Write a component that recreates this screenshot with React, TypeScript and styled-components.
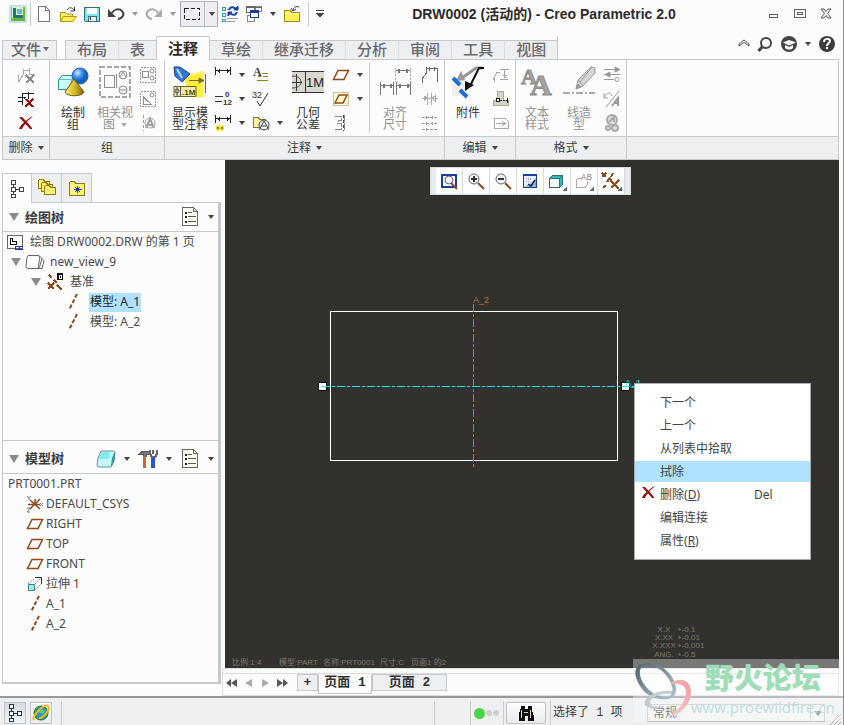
import React, { ReactNode } from "react";
import styled, { createGlobalStyle, css } from "styled-components";

const line = "#c5c8cc";
const strip = "#edeff1";
const paper = "#fcfcfc";
const ink = "#3c3c3c";
const brown = "#8f4a1c";
const uiFont = `"Noto Sans", "Noto Sans CJK SC", sans-serif`;

const GlobalStyle = createGlobalStyle`
  * { box-sizing: border-box; }
  body { margin: 0; background: ${paper}; font-family: ${uiFont}; font-size: 12px; color: ${ink}; }
  button, select { font: inherit; color: inherit; }
  button { background: none; border: 0; padding: 0; margin: 0; }
  ul { list-style: none; margin: 0; padding: 0; }
  h1, h2, p { margin: 0; }
`;

/* ---------- layout ---------- */

const Window = styled.div`
  position: relative;
  display: flex;
  flex-direction: column;
  min-height: 100vh;
  background: ${paper};
  border-right: 1px solid #8e8e8e;
`;

const TitleBar = styled.header`
  display: flex;
  align-items: center;
  height: 28px;
  padding: 0 4px 0 6px;
`;

const Title = styled.h1`
  flex: 1;
  text-align: center;
  font: bold 14px/16px "Liberation Sans", "Noto Sans CJK SC", sans-serif;
  color: #2b2b2b;
  white-space: nowrap;
`;

const ToolButton = styled.button<{ $w?: number }>`
  display: flex;
  flex: none;
  align-items: center;
  justify-content: center;
  width: ${(p) => p.$w ?? 24}px;
  height: 24px;
`;

const SplitBox = styled.div`
  display: flex;
  border: solid #b4b8bc;
  border-width: 1px 0;
  background: #eceef1;
  box-shadow: inset 1px 0 #a5a9ad, inset -1px 0 #a5a9ad;
  & > button + button { border-left: 1px solid #b4b8bc; }
`;

const VRule = styled.span<{ $h?: number; $gap?: number }>`
  flex: none;
  width: 1px;
  height: ${(p) => p.$h ?? 24}px;
  margin: 0 ${(p) => p.$gap ?? 0}px;
  background: #c9ccd0;
`;

const TabRow = styled.nav`
  display: flex;
  align-items: flex-end;
  height: 31px;
  padding: 0 4px 0 2px;
`;

const TabStrip = styled.div`
  display: flex;
  align-items: flex-end;
  margin: 0 auto 0 8px;
  border-right: 1px solid ${line};
`;

const RibbonTab = styled.button<{ $active?: boolean }>`
  position: relative;
  display: flex;
  align-items: center;
  height: ${(p) => (p.$active ? 24 : 19)}px;
  padding: 0 11px 2px;
  border: 1px solid ${line};
  border-width: 1px 0 0 1px;
  background: ${strip};
  color: #6a6a6e;
  font-size: 15px;
  line-height: 16px;
  font-weight: 500;
  white-space: nowrap;
  & + & { border-left-color: #d9dcdf; }
  ${(p) =>
    p.$active &&
    css`
      && { border-color: ${line}; }
      background: ${paper};
      color: #2c2c2c;
      font-weight: 700;
      margin-bottom: -1px;
      border-radius: 2px 2px 0 0;
      box-shadow: 1px 0 ${line};
      z-index: 1;
    `}
`;

const FileTab = styled(RibbonTab)`
  padding: 0 7px 2px 8px;
  gap: 2px;
  border-width: 1px 1px 0 1px;
`;

const TabTools = styled.div`
  display: flex;
  align-self: center;
  align-items: center;
`;

const Ribbon = styled.section`
  display: flex;
  height: 101px;
  margin: 0 4px 0 2px;
  border: 1px solid ${line};
`;

const Group = styled.div<{ $fill?: boolean }>`
  display: flex;
  flex-direction: column;
  flex: ${(p) => (p.$fill ? "1" : "none")};
  border-right: ${(p) => (p.$fill ? 0 : 1)}px solid ${line};
`;

const GroupBody = styled.div<{ $l: number; $r: number }>`
  display: flex;
  flex: 1;
  padding: 3px ${(p) => p.$r}px 0 ${(p) => p.$l}px;
`;

const GroupLabel = styled.div`
  display: flex;
  align-items: center;
  justify-content: center;
  gap: 5px;
  height: 23px;
  border-top: 1px solid ${line};
  background: ${strip};
  line-height: 16px;
`;

const BigButton = styled.button<{ $dim?: boolean; $w?: number }>`
  display: flex;
  flex-direction: column;
  align-items: center;
  justify-content: flex-start;
  gap: 9px;
  width: ${(p) => p.$w ?? 42}px;
  padding-top: 3px;
  line-height: 12px;
  color: ${(p) => (p.$dim ? "#929292" : "#333")};
  white-space: nowrap;
`;

const Column = styled.div`
  display: flex;
  flex-direction: column;
  flex: none;
`;

const Line = styled.div`
  display: flex;
`;

const TextLine = styled.span`
  display: flex;
  align-items: center;
  justify-content: center;
  gap: 6px;
`;

const Main = styled.main`
  display: flex;
  flex: 1;
`;

const Sidebar = styled.aside`
  display: flex;
  flex-direction: column;
  flex: none;
  width: 219px;
  margin: 13px 0 12px 2px;
`;

const SideTabs = styled.div`
  display: flex;
  height: 29px;
`;

const SideTab = styled.button<{ $active?: boolean }>`
  display: flex;
  align-items: center;
  justify-content: center;
  width: 30px;
  border: 1px solid ${line};
  border-width: 1px 1px 0 0;
  background: ${(p) => (p.$active ? paper : strip)};
  &:first-child { border-left-width: 1px; }
  ${(p) => p.$active && css`margin-bottom: -1px; z-index: 1;`}
`;

const Panels = styled.div`
  display: flex;
  flex: 1;
  flex-direction: column;
  border: 1px solid ${line};
  border-width: 1px 3px 2px 1px;
`;

const Panel = styled.section`
  display: flex;
  flex: 1 1 auto;
  flex-direction: column;
  & + & { border-top: 1px solid ${line}; }
`;

const PanelHead = styled.div<{ $h: number }>`
  display: flex;
  align-items: center;
  gap: 6px;
  height: ${(p) => p.$h}px;
  padding: ${(p) => (p.$h > 30 ? 3 : 0)}px 0 0 6px;
  border-bottom: 1px solid ${line};
`;

const PanelTitle = styled.h2`
  flex: 1;
  padding-bottom: 1px;
  font-size: 13px;
  line-height: 18px;
  font-weight: 700;
`;

const PanelTools = styled.div`
  display: flex;
  align-items: center;
`;

const Tree = styled.ul`
  flex: 1 0 208px;
`;

const TreeRow = styled.li<{ $indent: number; $gap?: number }>`
  display: flex;
  align-items: center;
  gap: ${(p) => p.$gap ?? 4}px;
  height: 20px;
  padding-left: ${(p) => p.$indent}px;
  color: #4a4a4a;
  white-space: nowrap;
`;

const TreeLabel = styled.span<{ $selected?: boolean }>`
  padding: 0 1px 1px;
  line-height: 18px;
  background: ${(p) => (p.$selected ? "#aee2ff" : "none")};
  color: ${(p) => (p.$selected ? "#222" : "inherit")};
`;

const Work = styled.div`
  display: flex;
  flex: 1;
  flex-direction: column;
  min-width: 0;
  padding: 0 4px 0 1px;
`;

const Canvas = styled.div`
  position: relative;
  display: flex;
  flex: 1;
  align-items: flex-start;
  justify-content: center;
  margin-left: 3px;
  padding: 7px 4px 0 0;
  background: #33312d;
`;

const Sheet = styled.svg`
  position: absolute;
  inset: 0;
  width: 100%;
  height: 100%;
  font-family: "Liberation Sans", "Noto Sans CJK SC", sans-serif;
`;

const ViewBar = styled.div`
  position: relative;
  display: flex;
  height: 28px;
  padding: 0 5px;
  border: 1px solid #d5d9dd;
  background: #e9ecef;
`;

const ViewButton = styled.button`
  display: flex;
  align-items: center;
  justify-content: center;
  width: 27px;
  border-right: 1px solid #d9dcdf;
  background: #fff;
`;

const Menu = styled.ul`
  position: absolute;
  left: 409px;
  top: 223px;
  width: 177px;
  border: 1px solid #a9abae;
  background: #fff;
  && { padding: 7px 0; }
`;

const MenuItem = styled.button<{ $hot?: boolean }>`
  display: grid;
  grid-template-columns: 18px 94px 1fr;
  align-items: center;
  width: 100%;
  height: 23px;
  padding-left: 7px;
  text-align: left;
  line-height: 18px;
  color: #444;
  background: ${(p) => (p.$hot ? "linear-gradient(#aee2ff, #aee2ff) 0 1px / 100% 21px no-repeat" : "none")};
`;

const SheetBar = styled.div`
  height: 28px;
  padding-top: 4px;
  border: 1px solid #dcdfe2;
`;

const SheetTabs = styled.div`
  display: flex;
  align-items: flex-start;
  height: 22px;
  border-top: 1px solid #d9dcdf;
`;

const SheetNav = styled.div`
  display: flex;
  align-items: center;
  width: 74px;
  height: 18px;
`;

const SheetTab = styled.button<{ $active?: boolean; $w: number }>`
  width: ${(p) => p.$w}px;
  height: ${(p) => (p.$active ? 20 : 17)}px;
  padding-bottom: ${(p) => (p.$active ? 3 : 0)}px;
  border: 1px solid ${line};
  border-top-color: ${(p) => (p.$active ? paper : line)};
  background: ${(p) => (p.$active ? paper : strip)};
  font: bold 13px/15px "Liberation Mono", "Noto Sans CJK SC", monospace;
  color: #333;
  white-space: nowrap;
`;

const StatusBar = styled.footer`
  display: flex;
  align-items: center;
  height: 30px;
  padding: 2px 18px 0 4px;
  border-top: 2px solid #999;
  background: ${strip};
`;

const StatusButton = styled.button<{ $pressed?: boolean; $w: number }>`
  display: flex;
  flex: none;
  align-items: center;
  justify-content: center;
  width: ${(p) => p.$w}px;
  height: 22px;
  margin-right: 4px;
  border: 1px solid #bfc3c7;
  border-radius: ${(p) => (p.$w > 30 ? 2 : 0)}px;
  background: ${(p) => (p.$pressed ? "linear-gradient(#d8dbde, #f2f4f5)" : "linear-gradient(#fdfdfd, #e9ebed)")};
`;

const StatusSpace = styled.span`
  flex: 1;
`;

const Progress = styled.span`
  flex: none;
  width: 35px;
`;

const Lights = styled.div`
  display: flex;
  flex: none;
  align-items: center;
  justify-content: center;
  gap: 1px;
  width: 30px;
`;

const Light = styled.span<{ $on?: boolean }>`
  width: ${(p) => (p.$on ? 11 : 6)}px;
  height: ${(p) => (p.$on ? 11 : 6)}px;
  border-radius: 50%;
  background: ${(p) => (p.$on ? "#4bd24b" : "#cdcfcd")};
`;

const Selected = styled.output`
  flex: none;
  width: 96px;
  padding-left: 2px;
  font: 12px/16px "Liberation Mono", "Noto Sans CJK SC", monospace;
  white-space: nowrap;
`;

const FilterBox = styled.div`
  position: relative;
  display: flex;
  flex: none;
  width: 178px;
`;

const Filter = styled.select`
  appearance: none;
  width: 100%;
  height: 18px;
  padding: 0 5px;
  border: 1px solid #c0c3c6;
  background: #f1f2f3;
  line-height: 16px;
`;

const FilterArrow = styled.span`
  position: absolute;
  right: 1px;
  top: 1px;
  display: flex;
  align-items: center;
  justify-content: center;
  width: 14px;
  height: 16px;
  border-left: 1px solid ${line};
  pointer-events: none;
`;

const Grip = styled.svg`
  position: absolute;
  right: 2px;
  bottom: 0;
`;

const Watermark = styled.div`
  position: absolute;
  right: 0;
  bottom: 5px;
  display: flex;
  width: 210px;
  height: 62px;
  background: rgba(255, 255, 255, 0.35);
  pointer-events: none;
`;

const WatermarkText = styled.div`
  display: flex;
  flex-direction: column;
  align-items: center;
  margin-left: -14px;
  font-weight: 900;
  font-size: 29px;
  line-height: 38px;
  color: #9fdcb8;
  white-space: nowrap;
`;

const WatermarkUrl = styled.span`
  font: 15px/20px "Open Sans", sans-serif;
  color: #b9dfdf;
`;

/* ---------- icons ---------- */

type IconProps = { s?: number; w?: number; vb?: string; soft?: boolean; children?: ReactNode };

const Icon = ({ s = 18, w, vb, soft, children }: IconProps) => (
  <svg
    width={w ?? s}
    height={s}
    viewBox={vb ?? `0 0 ${w ?? s} ${s}`}
    fill="none"
    stroke="#444"
    overflow="visible"
    shapeRendering={soft ? "auto" : "crispEdges"}
    aria-hidden="true"
  >
    {children}
  </svg>
);

const Caret = ({ c = "#444", s = 6 }: { c?: string; s?: number }) => (
  <svg width={s} height={s / 2 + 1} viewBox="0 0 6 4" preserveAspectRatio="none" fill={c} aria-hidden="true">
    <path d="M0 0h6L3 4z" />
  </svg>
);

const CaretButton = ({ c, label }: { c?: string; label: string }) => (
  <ToolButton $w={14} aria-label={label}><Caret c={c} /></ToolButton>
);

const RedX = ({ s = 14 }: { s?: number }) => (
  <Icon s={s} vb="0 0 14 14" soft>
    <path d="M0 1h3l4 4c2-2 4-4 7-5-3 3-5 4-6 6l5 6v1h-2L6.500 8C5 9 4 11 3 13H0c1-3 3-5 5-6.500z" fill="#960d0d" stroke="none" />
  </Icon>
);

const AppIcon = () => (
  <Icon>
    <rect x="0" y="0" width="18" height="18" fill="#c3e2f2" stroke="none" />
    <rect x="2" y="2" width="14" height="14" fill="#8cc63f" stroke="none" />
    <path d="M16 2v14H2z" fill="#6db33a" stroke="none" />
    <rect x="3" y="2" width="11" height="11" fill="#e3f2b4" stroke="none" />
    <path d="M4 3h3v7h7v3H4z" fill="#1d7386" stroke="none" />
    <rect x="8" y="4" width="5" height="5" fill="#4fbfe4" stroke="none" />
  </Icon>
);

const NewIcon = () => (
  <Icon><path d="M3.500 1.500h7l4 4v11h-11zM10.500 1.500v4h4" fill="#fff" stroke="#777" /></Icon>
);

const OpenIcon = () => (
  <Icon soft>
    <path d="M1.500 16V7.500h5l1 1.500h6v3" fill="#ffe97a" stroke="#b8960a" />
    <path d="M1.500 16.500l3-5h13l-4 5z" fill="#ffee58" stroke="#b8960a" />
    <path d="M8 5c2-3 5-3 7 0M15.500 2v4h-4" stroke="#333" />
  </Icon>
);

const SaveIcon = () => (
  <Icon>
    <path d="M1.500 2.500h15v14h-14l-1-1z" fill="#7fe3ea" stroke="#3c6c74" />
    <rect x="4" y="3" width="10" height="6" fill="#fff" stroke="#9ab" strokeWidth="0" />
    <rect x="5.500" y="11.500" width="8" height="5" fill="#e6f6f8" stroke="#3c6c74" />
    <path d="M7.500 12v3" />
  </Icon>
);

const Undo = ({ c, flip }: { c: string; flip?: boolean }) => (
  <Icon soft>
    <g transform={flip ? "matrix(-1 0 0 1 18 0)" : undefined}>
      <path d="M5 8c2-4 7-5 10-2s1 7-4 8" stroke={c} strokeWidth="2" />
      <path d="M1 4v8h8z" fill={c} stroke="none" />
    </g>
  </Icon>
);

const SelectIcon = () => (
  <Icon><rect x="1.500" y="3.500" width="15" height="11" stroke="#222" strokeDasharray="4 2" /></Icon>
);

const RegenIcon = () => (
  <Icon>
    <path d="M1.500 2.500h3v3h-3zM1.500 8.500h3v3h-3zM1.500 14.500h3v2h-3z" stroke="#2aa4b4" />
    <path d="M6 4.500h2M6 10.500h2M6 13.500h11M6 16.500h8" stroke="#999" />
    <g shapeRendering="auto" stroke="#1745a0" strokeWidth="2"><path d="M8 5c1-3 4-4 7-1M16 7c-1 3-4 4-7 1" /><path d="M17 1v4h-4zM7 11V7h4z" fill="#1745a0" strokeWidth="1" /></g>
  </Icon>
);

const WindowsIcon = () => (
  <Icon>
    <rect x="1.500" y="1.500" width="8" height="6" fill="#fff" stroke="#666" />
    <rect x="10.500" y="1.500" width="6" height="5" fill="#fff" stroke="#888" />
    <rect x="2.500" y="10.500" width="7" height="6" fill="#fff" stroke="#888" />
    <path d="M1 2.500h9M10 2.500h7" stroke="#666" />
    <rect x="5.500" y="5.500" width="8" height="7" fill="#fff" stroke="#123f91" />
    <path d="M5 6.500h9" stroke="#123f91" strokeWidth="2" />
  </Icon>
);

const FolderCloseIcon = () => (
  <Icon>
    <path d="M1.500 5.500h6l1 2h8v9h-15z" fill="#ffee55" stroke="#a88b0c" />
    <path d="M2 8.500h14" stroke="#fffbd0" />
    <path d="M16 2c-3-1-5 0-6 3M8 3l2 3 3-2" stroke="#333" shapeRendering="auto" />
  </Icon>
);

const CutSketchIcon = () => (
  <Icon>
    <path d="M2 16l5-9M6.500 3v4M12.500 2v7M7 4.500h5M12 8.500h5M1 9v7M8 10h4" stroke="#a9a9a9" />
    <path d="M9 9l8 8M17 9l-8 8" stroke="#8d8d8d" strokeWidth="2" />
  </Icon>
);

const CutLineIcon = () => (
  <Icon>
    <path d="M1 7.500h8M5.500 3v12M5 3.500h12M11.500 2v7M1 11.500h5M6 7l4 4" stroke="#222" />
    <path d="M9 9l7 8M16 9l-8 8" stroke="#960d0d" strokeWidth="2" />
  </Icon>
);

const DraftGroupIcon = () => (
  <Icon s={32} soft>
    <defs>
      <radialGradient id="ball" cx=".35" cy=".3"><stop offset="0" stopColor="#d8efff" /><stop offset=".5" stopColor="#4b9cf0" /><stop offset="1" stopColor="#155ec0" /></radialGradient>
      <linearGradient id="cone"><stop offset="0" stopColor="#fff07a" /><stop offset=".5" stopColor="#d9b92c" /><stop offset="1" stopColor="#7c6410" /></linearGradient>
    </defs>
    <path d="M1.500 13.500l4-4h13v10l-4 4h-13z" fill="#cbfafa" stroke="#2a9494" />
    <path d="M1.500 13.500h13l4-4M14.500 13.500v10" stroke="#62bcbc" />
    <circle cx="23" cy="10" r="8" fill="url(#ball)" stroke="#2566bf" />
    <path d="M17 13L8 26c2 5 17 5 19 0z" fill="url(#cone)" stroke="#6d5810" />
  </Icon>
);

const RelatedViewIcon = () => (
  <Icon s={32}>
    <rect x="1" y="1" width="30" height="30" stroke="#a6a6a6" strokeWidth="2" strokeDasharray="5 2" />
    <path d="M5.500 9.500h10v12h-10zM17.500 8v14" stroke="#8e8e8e" />
    <g stroke="#8e8e8e" shapeRendering="auto"><circle cx="24" cy="9" r="4" /><path d="M21 11l3-5 3 5" /><circle cx="24" cy="24" r="4" /><path d="M21 24h6" /></g>
  </Icon>
);

const SmallView = ({ kind }: { kind: number }) => (
  <Icon>
    {kind < 2 && <rect x="1.500" y="1.500" width="15" height="15" stroke="#999" strokeDasharray="2 1" />}
    {kind === 0 && <g stroke="#8e8e8e"><path d="M3.500 5.500h6v6h-6z" /><circle cx="13" cy="5" r="2" shapeRendering="auto" /><circle cx="13" cy="12" r="2" shapeRendering="auto" /></g>}
    {kind === 1 && <g stroke="#8e8e8e"><path d="M4.500 7v7H12zM4 7l8 7" /><circle cx="13" cy="5" r="2" shapeRendering="auto" /></g>}
    {kind === 2 && <g stroke="#a0a0a0"><path d="M4.500 1v16" strokeDasharray="3 2" /><g shapeRendering="auto"><circle cx="11" cy="9" r="5" /><path d="M7 14l4-9 4 9M8 11h6" strokeWidth="2" /></g></g>}
  </Icon>
);

const ShowAnnotationsIcon = () => (
  <Icon s={32} w={34} vb="0 0 34 32" soft>
    <path d="M11 11l20-6v26H16z" fill="#ffec3d" stroke="none" />
    <path d="M12 10l18-4v24" stroke="#fff47f" strokeWidth="3" strokeDasharray="2 2" />
    <path d="M1 1h6l10 7-8 8-7-6z" fill="#3478d8" stroke="#174488" />
    <path d="M4 3l5 9" stroke="#bddcff" strokeWidth="2" />
    <path d="M16 14.500h15M26 12v5l5-2.500zM32.500 8v19" stroke="#75701a" fill="#75701a" />
    <path d="M1 20.500h22v10H1z" fill="#ede9a8" stroke="#6b6420" />
    <path d="M7.500 20v11M4 21v9" stroke="#555" />
    <circle cx="4" cy="25" r="2" stroke="#555" />
    <text x="9" y="29" fontSize="8" fontWeight="700" fontFamily="Liberation Sans" fill="#55500f" stroke="none">.1M</text>
  </Icon>
);

const DimIcon = ({ tag }: { tag?: boolean }) => (
  <Icon>
    <path d="M1.500 1v8M16.500 1v8M2 4.500h15M5 2.500v4M4 3.500v2M13 2.500v4M14 3.500v2" stroke="#222" />
    {tag && <g shapeRendering="auto"><rect x="2" y="11" width="8" height="6" fill="#ffee55" stroke="none" /><circle cx="4" cy="14" r="1" stroke="#776d10" /><circle cx="8" cy="14" r="1" stroke="#776d10" /></g>}
  </Icon>
);

const OrdinateIcon = () => (
  <Icon><path d="M1 6.500h8M1 11.500h7" stroke="#333" /><g fontSize="8" fontWeight="700" fill="#333" stroke="none" fontFamily="Liberation Sans"><text x="11" y="7">0</text><text x="9" y="15">12</text></g></Icon>
);

const NoteIcon = () => (
  <Icon><text x="1" y="10" fontSize="12" fontWeight="700" fontFamily="Liberation Serif" fill="#444" stroke="none">A</text><path d="M10 7.500h6M6 10.500h3M11 10.500h5M5 14.500h11" stroke="#8a8420" /></Icon>
);

const FinishIcon = () => (
  <Icon soft><text x="0" y="8" fontSize="9" fontFamily="Liberation Sans" fill="#333" stroke="none">32</text><path d="M5 11l3 5 8-13" stroke="#333" /></Icon>
);

const SymbolIcon = () => (
  <Icon>
    <path d="M1.500 3.500h5l1 2h6v8h-12z" fill="#fff3a0" stroke="#8a7a20" />
    <g shapeRendering="auto"><circle cx="12" cy="11" r="5" fill="#eee" stroke="#444" /><path d="M7 16l5-9 5 9M10 12h4" /></g>
  </Icon>
);

const GtolIcon = () => (
  <Icon s={32}>
    <rect x="0" y="5" width="32" height="22" fill="#d9d7cf" stroke="none" />
    <path d="M0 5.500h32M0 26.500h32M13.500 5v22M0 16.500h10M4.500 8v17" stroke="#333" />
    <path d="M0 10c5 0 9 2 9 6s-4 6-9 6" shapeRendering="auto" />
    <text x="14" y="21" fontSize="13" fontFamily="Liberation Sans" fill="#222" stroke="none">1M</text>
  </Icon>
);

const PlaneIcon = ({ framed }: { framed?: boolean }) => (
  <Icon soft>
    {framed && <rect x="1.500" y="2.500" width="15" height="13" fill="#fffbd8" stroke="#c9c39a" />}
    <path d={framed ? "M7 5h8l-4 8H3z" : "M6 4.500h10.500L12 13.500H1.500z"} stroke={brown} strokeWidth="1.500" />
  </Icon>
);

const TargetIcon = () => (
  <Icon><path d="M3 2h6v4H6v3h3v6H3M12.500 1v16M5 9h4" stroke="#888" strokeDasharray="7 1" /><path d="M11.500 1v16" stroke="#444" strokeDasharray="3 2" /></Icon>
);

const AlignDimIcon = () => (
  <Icon s={32}>
    <path d="M16.500 2v9M31.500 2v9M16.500 12v4M31.500 12v4" stroke="#aaa" strokeDasharray="2 1" />
    <path d="M17 4.500h14M1.500 16v13M14.500 16v13M17.500 16v13M31.500 16v13M2 19.500h12M18 19.500h13" stroke="#777" />
    <path d="M20 2.500v4M28 2.500v4M4.500 17.500v4M11.500 17.500v4M20.500 17.500v4M28.500 17.500v4" stroke="#777" strokeWidth="2" />
  </Icon>
);

const DimEditIcon = ({ kind }: { kind: number }) => (
  <Icon>
    {kind === 0 && <path d="M1.500 17v-5l4-5V1M5 2.500h11M16.500 2v14M8 1v4M13 1v4" stroke="#666" />}
    {kind === 1 && <path d="M1 8.500h16M6.500 3v12M10.500 3v12M6 8l-3-2v5zM11 8l3-2v5z" stroke="#aaa" />}
    {kind === 2 && <path d="M1 3.500h16M1 9.500h16M1 15.500h16M5 1.500v4M11 1.500v4M5 7.500v4M11 7.500v4M5 13.500v4" stroke="#999" strokeDasharray="3 1" />}
  </Icon>
);

const AttachIcon = () => (
  <Icon s={32} soft>
    <path d="M0 12h14v18H0z" fill="#f1f0ea" stroke="none" />
    <path d="M31 2H24L10 12" stroke="#999" strokeWidth="3" /><path d="M9 5l4 9-9 1z" fill="#999" stroke="none" />
    <path d="M32 2h-5l-9 18" stroke="#111" strokeWidth="2" /><path d="M13 15l9 4-9 6z" fill="#111" stroke="none" />
    <path d="M1 12l7 7M8 24l7 7" stroke="#1d6fd8" strokeWidth="4" />
  </Icon>
);

const EditIcon = ({ kind }: { kind: number }) => (
  <Icon>
    {kind === 0 && <path d="M1 14l4-8h3M2.500 16v-5M8 3.500h9M12.500 4v8M10.500 9.500h4M8 13.500h8M11.500 11.500h2" stroke="#a5a5a5" />}
    {kind === 1 && <g><path d="M5.500 1.500h6v9h5v5h-15v-5h4z" fill="#d4d3c4" stroke="#aaa99a" /><rect x="4.500" y="8.500" width="3" height="3" fill="#fff" stroke="#222" /><path d="M8 10.500h9M15.500 8v5" stroke="#222" strokeDasharray="2 1" /></g>}
    {kind === 2 && <path d="M2.500 4.500h11l3 3v7h-14zM4 9.500h8M10 7l3 2.500L10 12" stroke="#aaa" />}
  </Icon>
);

const TextStyleIcon = () => (
  <Icon s={32} soft><g fontFamily="Liberation Serif" fontWeight="700" fill="#a4a4a4" stroke="#8d8d8d"><text x="0" y="18" fontSize="22">A</text><text x="9" y="29" fontSize="30">A</text></g></Icon>
);

const LineStyleIcon = () => (
  <Icon s={32} soft>
    <path d="M13 23l2-9L28 1l4 1v5L20 20z" fill="#d6d6d6" stroke="#999" /><path d="M13 23l2-5 3 3zM15 14l5 6M29 1L17 16" fill="#999" stroke="#999" />
    <path d="M0 27h32" stroke="#aaa" strokeWidth="2" strokeDasharray="7 2 2 2" />
  </Icon>
);

const FormatIcon = ({ kind }: { kind: number }) => (
  <Icon soft>
    {kind === 0 && <g stroke="#999"><path d="M1 3.500h14M1 8.500h16M1 13.500h10" /><path d="M12 1l5 2.500L12 6zM7 6l-5 2.500L7 11z" fill="#999" /><circle cx="14" cy="13.500" r="2" /></g>}
    {kind === 1 && <g stroke="#999"><path d="M2 7c1-5 6-5 7-1M1 3v5h4M3 17L16 1" /><path d="M9 16l6-8v8M11 13h4" strokeWidth="2" /></g>}
    {kind === 2 && <g stroke="#aaa" strokeWidth="2" fill="#ddd"><circle cx="9" cy="6" r="5" /><path d="M6 8l5-5v5" /><circle cx="5" cy="14" r="2" /><circle cx="12" cy="14" r="3" /></g>}
  </Icon>
);

const TreeIcon = ({ c = "#444" }: { c?: string }) => (
  <Icon><path d="M3.500 0.500h4v4h-4zM3.500 7.500h4v4h-4zM3.500 14.500h4v3h-4zM11.500 7.500h4v4h-4zM5.500 5v2M5.500 12v2M8 9.500h3" stroke={c} fill="#fff" /></Icon>
);

const FoldersIcon = () => (
  <Icon s={20}>
    {[0, 3, 6].map((d) => (
      <path key={d} d={`M${1.5 + d} ${10.5 + d}v-8l1-1h4l1 2h5v7z`} fill="#fff176" stroke="#8f7a10" />
    ))}
  </Icon>
);

const StarFolderIcon = () => (
  <Icon s={18}>
    <path d="M1.500 16.500v-13l1-1h4l1 2h9v12z" fill="#fff37a" stroke="#8f7a10" />
    <path d="M9.500 7v7M6 10.500h8M7 8l5 5M12 8l-5 5" stroke="#1f2fb0" />
  </Icon>
);

const ListIcon = () => (
  <Icon s={20}>
    <path d="M2.500 0.500h11l4 4v14h-15zM13.500 0.500v4h4" fill="#fffef2" stroke="#666" />
    <path d="M5 5.500h2M5 9.500h2M5 14.500h2" stroke="#222" strokeWidth="2" /><path d="M8 5.500h4M8 9.500h8M8 14.500h8" stroke="#555" />
  </Icon>
);

const SolidIcon = () => (
  <Icon s={20} soft>
    <path d="M5 2h12q2 0 2 2l-1 8-3 6H3q-2 0-2-2l1-7z" fill="#c4f8fa" stroke="#6d8f90" /><path d="M5 3h9l-1 7H3z" fill="#7eebef" stroke="none" /><path d="M15 17l1-8 2-5h1v6l-3 7z" fill="#3b98a6" stroke="none" />
  </Icon>
);

const ToolsIcon = () => (
  <Icon s={20}>
    <path d="M1 5l4-3h6v3H8v2H5V5z" fill="#777" stroke="#555" /><path d="M6.500 7v12" stroke="#c0702a" strokeWidth="3" />
    <path d="M15 9v10" stroke="#1c5cc4" strokeWidth="4" /><path d="M12 1v4l2 3h3l2-3V1M15 1v4" stroke="#666" strokeWidth="2" />
  </Icon>
);

const DrawingIcon = () => (
  <Icon s={16}><path d="M.5 1.500h15v13H.5z" fill="#fff" stroke="#666" /><path d="M3.500 4v6h6V7.500h-4V4z" fill="#fff" stroke="#111" /><path d="M8 12.500h8M8 15h8M8.500 12v4M12 12v4" stroke="#1734b8" /></Icon>
);

const ViewIcon = () => (
  <Icon s={18} w={20} soft><path d="M3 2.500h11l5 5-2 8H3q-2 0-2-2l1-9z" fill="#fff" stroke="#666" /><path d="M11.500 15.500q2 0 2-2l1-8q0-2-1-3M13 15.500q2-1 2-3l2-7" stroke="#666" /></Icon>
);

const DatumIcon = () => (
  <Icon s={18}><path d="M3 2l3 3M8 7l3 3M2 10l6 6M8 10l-6 6M11 12l5 5" stroke={brown} strokeWidth="2" /><rect x="11" y="0" width="6" height="7" fill="#111" stroke="none" /><path d="M13 2.500h2v3h-2z" stroke="#fff" /></Icon>
);

const AxisIcon = () => (
  <Icon s={18} w={16} soft><path d="M12 1L4 17" stroke={brown} strokeWidth="2" strokeDasharray="4 2" /></Icon>
);

const CsysIcon = () => (
  <Icon s={18} soft><path d="M4 5l10 9M14 4L4 14M2 9.500h12M9 4v6" stroke={brown} strokeWidth="1.500" /><path d="M1 1l2 2 2-2M3 3v2M14 8l3 3M17 8l-3 3M1 13h3l-3 4h3" stroke="#777" /></Icon>
);

const ExtrudeIcon = () => (
  <Icon s={18} soft><path d="M2.500 9.500h6v6h-6z" fill="#9af4f6" stroke="#357f8a" /><path d="M2 9l7-6M9 9l6-6M9 15l6-6" stroke="#888" strokeDasharray="2 1" /><path d="M9 2.500h6.500V9" stroke="#333" /></Icon>
);

const Expander = () => (
  <svg width="10" height="8" viewBox="0 0 10 8" fill="#8b8b8b" aria-hidden="true"><path d="M0 0h10L5 8z" /></svg>
);

const Lens = ({ sign, framed }: { sign?: string; framed?: boolean }) => (
  <Icon s={18} soft>
    {framed && <path d="M1.500 2.500h14v12h-14z" fill="#fff" stroke="#173f9b" strokeWidth="2" shapeRendering="crispEdges" />}
    <circle cx={framed ? 9 : 7} cy={framed ? 8 : 7} r={framed ? 4 : 5} fill="#f4f8fb" stroke="#666" />
    <path d="M11 11l6 6" stroke="#8c4a1d" strokeWidth="2" />
    {sign && <path d={sign} stroke="#333" strokeWidth="2" shapeRendering="crispEdges" />}
  </Icon>
);

const ViewIcons = [
  <Lens framed />,
  <Lens sign="M4 7h6M7 4v6" />,
  <Lens sign="M4 7h6" />,
  <Icon><rect x="2.500" y="2.500" width="13" height="13" fill="#e6f0f8" stroke="#173f9b" /><path d="M2 3h14" stroke="#173f9b" strokeWidth="2" /><path d="M5 6h5M5 9h4M7 7.500h4" stroke="#8ab5e0" strokeDasharray="1 1" /><path d="M3 15l6-3 6-6v9z" fill="#8fb4dc" stroke="none" shapeRendering="auto" /><path d="M7 12l3 2 4-6" stroke="#123" strokeWidth="1.500" shapeRendering="auto" /></Icon>,
  <Icon><path d="M1.500 6.500h10v9h-10z" fill="#f4ffff" stroke="#555" /><path d="M1.500 6.500l3-3h10l-3 3zM11.500 6.500l3-3v9l-3 3z" fill="#2fb7bf" stroke="#277" /><path d="M19 14v5h-4z" fill="#666" stroke="none" /></Icon>,
  <Icon><path d="M1.500 6.500h5M1.500 7v8h9l2-3V9" stroke="#aaa" /><text x="6" y="8" fontSize="9" fontFamily="Liberation Mono" fill="#888" stroke="none">AB</text><path d="M19 14v5h-4z" fill="#666" stroke="none" /></Icon>,
  <Icon s={20}><path d="M1 2l4 4M5 2L1 6M12 2l-2 4M8 8l-2 3M4 14l-1 3M8 7l3 3M10 10l8 8M18 9l-8 8" stroke={brown} strokeWidth="2" /><path d="M21 15v5h-4z" fill="#666" stroke="none" /></Icon>,
];
const viewNames = ["重新调整", "放大", "缩小", "重画", "显示样式", "注释显示", "基准显示"];

const GlobeIcon = () => (
  <Icon soft><circle cx="9" cy="9" r="7" fill="#33a853" stroke="#156e2c" /><path d="M5 4l6-1 4 5-3 7-5-1-3-5z" fill="#2d8fe0" stroke="none" /><path d="M6 8l3-3 4 2-2 3z" fill="#58d06b" stroke="none" /><path d="M2 16C-1 13 12-1 16 2s-6 13-9 12" stroke="#f2b51d" strokeWidth="2" /></Icon>
);

const BinocularsIcon = () => (
  <Icon s={18}><path d="M4 2h3v3h4V2h3v3l2 6v5h-5v-5H7v5H2v-5l2-6z" fill="#111" stroke="#111" /><path d="M4.500 6v8M13.500 6v8M7 8h4" stroke="#d8d8a8" /></Icon>
);

/* ---------- data ---------- */

const tabs = ["布局", "表", "注释", "草绘", "继承迁移", "分析", "审阅", "工具", "视图"];

type MenuRow = { text: string; key?: string; shortcut?: string; icon?: boolean; hot?: boolean };
const menu: MenuRow[] = [
  { text: "下一个" },
  { text: "上一个" },
  { text: "从列表中拾取" },
  { text: "拭除", hot: true },
  { text: "删除", key: "D", shortcut: "Del", icon: true },
  { text: "编辑连接" },
  { text: "属性", key: "R" },
];

const modelRows: [ReactNode, string][] = [
  [<CsysIcon />, "DEFAULT_CSYS"],
  [<PlaneIcon />, "RIGHT"],
  [<PlaneIcon />, "TOP"],
  [<PlaneIcon />, "FRONT"],
  [<ExtrudeIcon />, "拉伸 1"],
  [<AxisIcon />, "A_1"],
  [<AxisIcon />, "A_2"],
];

const sheetNotes: [number, string][] = [[7, "比例:1:4"], [54, "模型:PART"], [98, "名称:PRT0001"], [155, "尺寸:C"], [186, "页面1 的2"]];
const tolerances: [number, string, string][] = [[472, "X.X", "+-0.1"], [480, "X.XX", "+-0.01"], [488, "X.XXX", "+-0.001"], [497, "ANG.", "+-0.5"]];

/* ---------- parts ---------- */

const CaretSpace = styled.span`
  width: 14px;
`;

const Big = ({ icon, lines, dim, caret, w }: { icon: ReactNode; lines: string[]; dim?: boolean; caret?: boolean; w?: number }) => (
  <BigButton $dim={dim} $w={w}>
    {icon}
    <span>
      {lines.map((t, i) => (
        <TextLine key={t}>{t}{caret && i === lines.length - 1 && <Caret c="#aaa" />}</TextLine>
      ))}
    </span>
  </BigButton>
);

const Small = ({ name, icons, carets }: { name: string; icons: ReactNode[]; carets?: boolean[] }) => (
  <Column>
    {icons.map((icon, i) => (
      <Line key={i}>
        <ToolButton aria-label={`${name} ${i + 1}`}>{icon}</ToolButton>
        {carets && (carets[i] ? <CaretButton label={`${name} ${i + 1} 选项`} /> : <CaretSpace />)}
      </Line>
    ))}
  </Column>
);

const RibbonGroup = ({ label, l, r, caret = true, children }: { label: string; l: number; r: number; caret?: boolean; children: ReactNode }) => (
  <Group>
    <GroupBody $l={l} $r={r}>{children}</GroupBody>
    <GroupLabel>{label}{caret && <Caret />}</GroupLabel>
  </Group>
);

const Drawing = () => (
  <Sheet shapeRendering="crispEdges" fill="none">
    <rect x="105.500" y="151.500" width="287" height="149" stroke="#fff" />
    <path d="M248.500 144v164" stroke="#b07a35" strokeDasharray="8 2 3 2" />
    <g fill="#fff" stroke="#000"><rect x="93.500" y="222.500" width="8" height="8" /><rect x="396.500" y="222.500" width="8" height="8" /></g>
    <path d="M97 226.500h315" stroke="#00f5f5" strokeDasharray="8 2 3 2" />
    <text x="248" y="143" fontSize="9" fill="#b07a35">A_2</text>
    <text x="400" y="226" fontSize="9" fill="#00f5f5">A_1</text>
    <g fontSize="8" fill="#7b7972">
      {sheetNotes.map(([x, t]) => <text key={t} x={x} y="505">{t}</text>)}
      {tolerances.map(([y, a, b]) => (
        <g key={a}><text x="439" y={y} textAnchor="middle">{a}</text><text x="452" y={y}>{b}</text></g>
      ))}
    </g>
  </Sheet>
);

export default function App() {
  return (
    <Window>
      <GlobalStyle />
      <TitleBar>
        <ToolButton aria-label="Creo"><AppIcon /></ToolButton>
        <VRule />
        <VRule $h={0} />
        <ToolButton aria-label="新建"><NewIcon /></ToolButton>
        <ToolButton aria-label="打开"><OpenIcon /></ToolButton>
        <ToolButton aria-label="保存"><SaveIcon /></ToolButton>
        <ToolButton aria-label="撤消"><Undo c="#444" /></ToolButton>
        <CaretButton c="#999" label="撤消列表" />
        <ToolButton aria-label="重做"><Undo c="#aaa" flip /></ToolButton>
        <CaretButton c="#999" label="重做列表" />
        <SplitBox>
          <ToolButton aria-label="选择"><SelectIcon /></ToolButton>
          <CaretButton label="选择选项" />
        </SplitBox>
        <ToolButton aria-label="重新生成"><RegenIcon /></ToolButton>
        <ToolButton aria-label="窗口"><WindowsIcon /></ToolButton>
        <CaretButton label="窗口列表" />
        <ToolButton aria-label="关闭窗口"><FolderCloseIcon /></ToolButton>
        <VRule $gap={4} />
        <ToolButton $w={14} aria-label="自定义快速访问工具栏">
          <Icon s={10} vb="0 0 10 10"><path d="M1 1.500h8" /><path d="M1 4h8L5 9z" fill="#444" stroke="none" /></Icon>
        </ToolButton>
        <Title>DRW0002 (活动的) - Creo Parametric 2.0</Title>
        <ToolButton $w={26} aria-label="最小化"><Icon s={12}><path d="M1.500 6.500h8v3h-8z" stroke="#666" /></Icon></ToolButton>
        <ToolButton $w={26} aria-label="最大化"><Icon s={12}><path d="M.5 1.500h11v8H.5zM3.500 4.500h5v2h-5z" stroke="#666" /></Icon></ToolButton>
        <ToolButton $w={26} aria-label="关闭">
          <Icon s={12} soft><path d="M1 1h3l2 2.500L8 1h3L7.500 5.500 11 10H8L6 7.500 4 10H1l3.500-4.500z" stroke="#555" /></Icon>
        </ToolButton>
      </TitleBar>

      <TabRow>
        <FileTab>文件<Caret c="#666" /></FileTab>
        <TabStrip>
          {tabs.map((t) => <RibbonTab key={t} $active={t === "注释"}>{t}</RibbonTab>)}
        </TabStrip>
        <TabTools>
          <ToolButton $w={18} aria-label="折叠功能区"><Icon s={12} soft><path d="M1 6l5-4 5 4v2L6 4.500 1 8z" stroke="#555" /></Icon></ToolButton>
          <ToolButton aria-label="搜索"><Icon s={16} soft><circle cx="9" cy="7" r="5" stroke="#444" strokeWidth="2" /><path d="M5.500 10.500L1.500 15" strokeWidth="3" /></Icon></ToolButton>
          <ToolButton aria-label="学习"><Icon s={18} soft><circle cx="9" cy="9" r="8" fill="#454545" stroke="none" /><path d="M3 7.500L9 5l7 2.500L9 10.500zM5 10v3c2 2 6 2 8 0v-3l-4 2z" fill="#fff" stroke="none" /></Icon></ToolButton>
          <CaretButton label="学习选项" />
          <ToolButton aria-label="帮助"><Icon s={18} soft><circle cx="9" cy="9" r="8" fill="#3d3d3d" stroke="none" /><path d="M6 7c0-4 6-4 6-1 0 2-3 2-3 5M9 12v2" stroke="#fff" strokeWidth="2" /></Icon></ToolButton>
        </TabTools>
      </TabRow>

      <Ribbon>
        <RibbonGroup label="删除" l={11} r={11}>
          <Small name="删除" icons={[<CutSketchIcon />, <CutLineIcon />, <RedX />]} />
        </RibbonGroup>
        <RibbonGroup label="组" l={2} r={4} caret={false}>
          <Big icon={<DraftGroupIcon />} lines={["绘制", "组"]} />
          <Big icon={<RelatedViewIcon />} lines={["相关视", "图"]} dim caret />
          <Small name="视图" icons={[0, 1, 2].map((k) => <SmallView key={k} kind={k} />)} />
        </RibbonGroup>
        <RibbonGroup label="注释" l={4} r={2}>
          <Big icon={<ShowAnnotationsIcon />} lines={["显示模", "型注释"]} />
          <Small name="尺寸" icons={[<DimIcon />, <OrdinateIcon />, <DimIcon tag />]} carets={[true, true, true]} />
          <Small name="注解" icons={[<NoteIcon />, <FinishIcon />, <SymbolIcon />]} carets={[false, false, true]} />
          <Big icon={<GtolIcon />} lines={["几何", "公差"]} />
          <Small name="基准" icons={[<PlaneIcon />, <PlaneIcon framed />, <TargetIcon />]} carets={[true, true, false]} />
          <VRule $h={70} $gap={2} />
          <Big icon={<AlignDimIcon />} lines={["对齐", "尺寸"]} dim w={46} />
          <Small name="尺寸编辑" icons={[0, 1, 2].map((k) => <DimEditIcon key={k} kind={k} />)} />
        </RibbonGroup>
        <RibbonGroup label="编辑" l={2} r={2}>
          <Big icon={<AttachIcon />} lines={["附件"]} />
          <Small name="编辑" icons={[0, 1, 2].map((k) => <EditIcon key={k} kind={k} />)} />
        </RibbonGroup>
        <RibbonGroup label="格式" l={0} r={2}>
          <Big icon={<TextStyleIcon />} lines={["文本", "样式"]} dim />
          <Big icon={<LineStyleIcon />} lines={["线造", "型"]} dim />
          <Small name="格式" icons={[0, 1, 2].map((k) => <FormatIcon key={k} kind={k} />)} />
        </RibbonGroup>
        <Group $fill><GroupBody $l={0} $r={0} /><GroupLabel /></Group>
      </Ribbon>

      <Main>
        <Sidebar>
          <SideTabs>
            <SideTab $active aria-label="模型树"><TreeIcon /></SideTab>
            <SideTab aria-label="文件夹浏览器"><FoldersIcon /></SideTab>
            <SideTab aria-label="收藏夹"><StarFolderIcon /></SideTab>
          </SideTabs>
          <Panels>
            <Panel>
              <PanelHead $h={29}>
                <Expander />
                <PanelTitle>绘图树</PanelTitle>
                <PanelTools>
                  <ToolButton $w={28} aria-label="绘图树设置"><ListIcon /></ToolButton>
                  <CaretButton label="绘图树选项" />
                </PanelTools>
              </PanelHead>
              <Tree>
                <TreeRow $indent={4} $gap={6}><DrawingIcon /><TreeLabel>绘图 DRW0002.DRW 的第 1 页</TreeLabel></TreeRow>
                <TreeRow $indent={8}><Expander /><ViewIcon /><TreeLabel>new_view_9</TreeLabel></TreeRow>
                <TreeRow $indent={28} $gap={5}><Expander /><DatumIcon /><TreeLabel>基准</TreeLabel></TreeRow>
                <TreeRow $indent={62} $gap={8}><AxisIcon /><TreeLabel $selected>模型: A_1</TreeLabel></TreeRow>
                <TreeRow $indent={62} $gap={8}><AxisIcon /><TreeLabel>模型: A_2</TreeLabel></TreeRow>
              </Tree>
            </Panel>
            <Panel>
              <PanelHead $h={33}>
                <Expander />
                <PanelTitle>模型树</PanelTitle>
                <PanelTools>
                  <ToolButton $w={28} aria-label="显示"><SolidIcon /></ToolButton>
                  <CaretButton label="显示选项" />
                  <ToolButton $w={28} aria-label="设置"><ToolsIcon /></ToolButton>
                  <CaretButton label="设置选项" />
                  <ToolButton $w={28} aria-label="列表"><ListIcon /></ToolButton>
                  <CaretButton label="列表选项" />
                </PanelTools>
              </PanelHead>
              <Tree>
                <TreeRow $indent={4}><TreeLabel>PRT0001.PRT</TreeLabel></TreeRow>
                {modelRows.map(([icon, t]) => (
                  <TreeRow key={t} $indent={23} $gap={1}><ToolButton as="span" $w={18}>{icon}</ToolButton><TreeLabel>{t}</TreeLabel></TreeRow>
                ))}
              </Tree>
            </Panel>
          </Panels>
        </Sidebar>

        <Work>
          <Canvas>
            <Drawing />
            <ViewBar>
              {ViewIcons.map((icon, i) => <ViewButton key={i} aria-label={viewNames[i]}>{icon}</ViewButton>)}
            </ViewBar>
            <Menu>
              {menu.map((m) => (
                <li key={m.text}>
                  <MenuItem $hot={m.hot}>
                    <span>{m.icon && <RedX s={13} />}</span>
                    <span>{m.text}{m.key && <>(<u>{m.key}</u>)</>}</span>
                    <span>{m.shortcut}</span>
                  </MenuItem>
                </li>
              ))}
            </Menu>
          </Canvas>
          <SheetBar>
            <SheetTabs>
              <SheetNav>
                {["M5 0v8L0 4zM11 0v8L5 4z", "M9 0v8L2 4z", "M2 0v8l7-4z", "M0 0v8l6-4zM6 0v8l5-4z"].map((d, i) => (
                  <ToolButton key={d} $w={17} aria-label={["首页", "上一页", "下一页", "末页"][i]}>
                    <svg width="11" height="8" fill={i === 1 || i === 2 ? "#aaa" : "#555"} aria-hidden="true"><path d={d} /></svg>
                  </ToolButton>
                ))}
              </SheetNav>
              <SheetTab $w={21}>+</SheetTab>
              <SheetTab $w={54} $active>页面 1</SheetTab>
              <SheetTab $w={75}>页面 2</SheetTab>
            </SheetTabs>
          </SheetBar>
        </Work>
      </Main>

      <StatusBar>
        <StatusButton $w={22} $pressed aria-label="导航器"><TreeIcon c="#1b3563" /></StatusButton>
        <StatusButton $w={22} aria-label="浏览器"><GlobeIcon /></StatusButton>
        <VRule $gap={5} />
        <StatusSpace />
        <VRule />
        <Progress />
        <VRule />
        <Lights><Light $on /><Light /><Light /></Lights>
        <VRule $gap={2} />
        <StatusButton $w={40} aria-label="查找"><BinocularsIcon /></StatusButton>
        <VRule />
        <Selected>选择了 1 项</Selected>
        <FilterBox>
          <Filter aria-label="选择过滤器"><option>常规</option></Filter>
          <FilterArrow><Caret c="#777" s={8} /></FilterArrow>
        </FilterBox>
        <Grip width="12" height="12" stroke="#aaa"><path d="M0 12L12 0M4 12l8-8M8 12l4-4" /></Grip>
      </StatusBar>

      <Watermark>
        <svg width="72" height="62" viewBox="0 0 72 62" fill="none" aria-hidden="true">
          <defs>
            <linearGradient id="ringBlue" x1="0" y1="0" x2="1" y2="1"><stop offset="0" stopColor="#4b626f" /><stop offset="1" stopColor="#b6c6d2" /></linearGradient>
            <linearGradient id="ringRed" x1="1" y1="0" x2="0" y2="1"><stop offset="0" stopColor="#f29da0" /><stop offset="1" stopColor="#f3d0d0" /></linearGradient>
          </defs>
          <path fillRule="evenodd" fill="url(#ringBlue)" d="M4 8C12 0 30 4 39 18c6 10 5 17 0 21-10 3-24 1-32-12C2 19 1 12 4 8zm4 1c-3 5 0 13 6 20 7 7 16 11 23 8 5-5 2-14-5-22C25 7 13 4 8 9z" />
          <path d="M39 32c-12-1-24 3-27 10-2 6 6 8 14 8-6-2-11-5-8-9 4-5 13-7 21-6z" fill="#c3ccd3" />
          <path d="M36 25c11-8 22-4 22 8 0 13-11 22-22 25 9-7 17-15 17-25 0-8-9-9-17-8z" fill="url(#ringRed)" />
        </svg>
        <WatermarkText>野火论坛<WatermarkUrl>www.proewildfire.cn</WatermarkUrl></WatermarkText>
      </Watermark>
    </Window>
  );
}
